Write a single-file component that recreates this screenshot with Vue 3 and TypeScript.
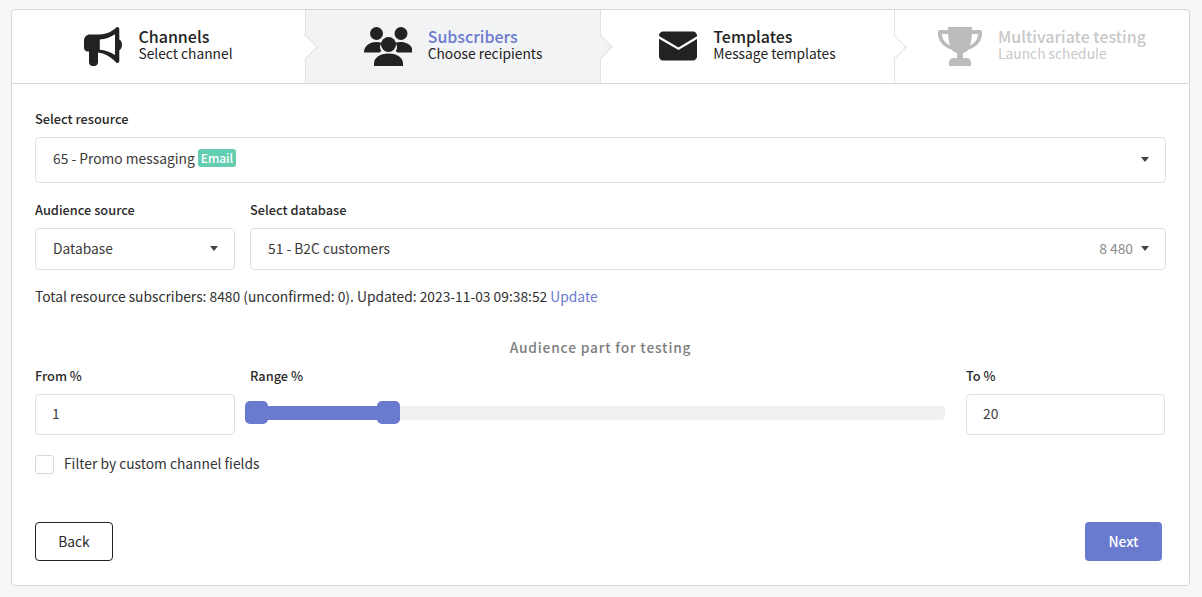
<script setup lang="ts">
import { computed, ref } from 'vue';

interface Step {
    key: string;
    title: string;
    sub: string;
    state?: 'active' | 'disabled';
}

const steps: Step[] = [
    { key: 'channels', title: 'Channels', sub: 'Select channel' },
    { key: 'subscribers', title: 'Subscribers', sub: 'Choose recipients', state: 'active' },
    { key: 'templates', title: 'Templates', sub: 'Message templates' },
    { key: 'testing', title: 'Multivariate testing', sub: 'Launch schedule', state: 'disabled' }
];

const from = ref(1);
const to = ref(20);
const filterByFields = ref(false);

// px per percent on the slider rail
const handleLeft = (v: number) => (v - 1) * 6.95;
const fillWidth = computed(() => handleLeft(to.value) - handleLeft(from.value) + 12);
</script>

<template>
    <div class="card">
        <div class="steps">
            <div v-for="step in steps" :key="step.key" class="step" :class="step.state">
                <svg v-if="step.key === 'channels'" class="step-icon" viewBox="0 0 38 39" fill="currentColor">
                    <path d="M32.5 0.2c1.4-.6 2.8.3 2.8 1.8v10.6c1.6.7 2.7 2.8 2.7 5.3s-1.1 4.600-2.700 5.300v10.800c0 1.500-1.400 2.400-2.800 1.800-6.200-6.500-11.900-9.300-18.500-10.300v9.700c0 2.100-1.600 3.800-3.700 3.800H8.700c-2.100 0-3.700-1.700-3.700-3.800V24.600H3.800C1.700 24.600 0 22.900 0 20.800v-6.900c0-3.900 2.700-6.300 6-6.300h5.800C20.700 7.600 26.500 6 32.500.2zM31 7.200c-4.500 3.200-9.800 4.900-15.200 5.300v10.300c5.400.5 10.700 2.100 15.200 5.300z" fill-rule="evenodd" />
                </svg>
                <svg v-else-if="step.key === 'subscribers'" class="step-icon wide" viewBox="0 0 48 39" fill="currentColor">
                    <circle cx="12.500" cy="6.500" r="6.500" />
                    <circle cx="37" cy="6.500" r="6.500" />
                    <path d="M0 25.500C0 19.500 5 15 12.500 15c2 0 3.800.3 5.300.9-2.200 2.300-2.400 5.500-.5 8.100-.7.500-1.300 1-1.800 1.500z" />
                    <path d="M49 25.500C49 19.500 44 15 36.500 15c-2 0-3.800.3-5.300.9 2.200 2.300 2.400 5.500.5 8.100.7.500 1.300 1 1.800 1.500z" />
                    <circle cx="24.500" cy="17.500" r="7.500" />
                    <path d="M10 39v-2.500C10 31 15.500 26.500 24.500 26.500s14.500 4.500 14.500 10V39z" />
                </svg>
                <svg v-else-if="step.key === 'templates'" class="step-icon" viewBox="0 0 38 38" fill="currentColor">
                    <path d="M4 4h30c2.200 0 4 1.800 4 4v.8L19.500 20 0 8.600V8c0-2.200 1.800-4 4-4z" />
                    <path d="M0 11.200l19.500 11.400L38 11.400V29c0 2.200-1.800 4-4 4H4c-2.200 0-4-1.800-4-4z" />
                </svg>
                <svg v-else class="step-icon wide" viewBox="0 0 44 39" fill="currentColor">
                    <path d="M10 0h24v3h8c1.200 0 2 .8 2 2v2c0 8-7 14-13.500 15.500-1.500 1.800-3.500 3.100-5.500 3.700V31h3.500c2.500 0 4.500 1.500 4.500 5v3H11v-3c0-3.500 2-5 4.500-5H19v-4.800c-2-.6-4-1.900-5.500-3.700C7 21 0 15 0 7V5c0-1.200.8-2 2-2h8zM4 7c0 5 4 9.800 8 11.300C10.800 15 10.200 11 10 7zm36 0h-6c-.2 4-.8 8-2 11.300 4-1.500 8-6.300 8-11.300z" fill-rule="evenodd" />
                </svg>
                <div class="step-text">
                    <div class="step-title">{{ step.title }}</div>
                    <div class="step-sub">{{ step.sub }}</div>
                </div>
                <span class="step-arrow"></span>
            </div>
        </div>

        <div class="content">
            <label class="field-label">Select resource</label>
            <div class="select tall">
                <span class="select-value">65 - Promo messaging</span>
                <span class="tag">Email</span>
                <span class="caret"></span>
            </div>

            <div class="row row-source">
                <div class="col-side">
                    <label class="field-label">Audience source</label>
                    <div class="select">
                        <span class="select-value">Database</span>
                        <span class="caret"></span>
                    </div>
                </div>
                <div class="col-main">
                    <label class="field-label">Select database</label>
                    <div class="select">
                        <span class="select-value">51 - B2C customers</span>
                        <span class="count">8 480</span>
                        <span class="caret"></span>
                    </div>
                </div>
            </div>

            <p class="totals">
                Total resource subscribers: 8480 (unconfirmed: 0). Updated: 2023-11-03 09:38:52
                <a class="link">Update</a>
            </p>

            <div class="part-title">Audience part for testing</div>

            <div class="row">
                <div class="col-side">
                    <label class="field-label">From %</label>
                    <input v-model="from" class="input" type="text" />
                </div>
                <div class="col-main">
                    <label class="field-label">Range %</label>
                    <div class="slider">
                        <div class="slider-fill" :style="{ left: handleLeft(from) + 6 + 'px', width: fillWidth + 'px' }"></div>
                        <span class="slider-handle" :style="{ left: handleLeft(from) + 'px' }"></span>
                        <span class="slider-handle" :style="{ left: handleLeft(to) + 'px' }"></span>
                    </div>
                </div>
                <div class="col-side col-to">
                    <label class="field-label">To %</label>
                    <input v-model="to" class="input" type="text" />
                </div>
            </div>

            <label class="check">
                <input v-model="filterByFields" type="checkbox" />
                <span class="check-box"></span>
                <span class="check-text">Filter by custom channel fields</span>
            </label>

            <div class="actions">
                <button class="btn btn-back" type="button">Back</button>
                <button class="btn btn-next" type="button">Next</button>
            </div>
        </div>
    </div>
</template>

<style scoped>
.card {
    box-sizing: border-box;
    width: 1179px;
    height: 577px;
    margin: 9px 0 0 11px;
    background: #fff;
    border: 1px solid #d8d8d8;
    border-radius: 4px;
    color: #222;
    font-family: "Noto Sans CJK SC", "Noto Sans", sans-serif;
    font-size: 14px;
    overflow: hidden;
}

.steps {
    display: grid;
    grid-template-columns: 293px 295px 294px 1fr;
    height: 74px;
    border-bottom: 1px solid #d8d8d8;
    box-sizing: border-box;
}

.step {
    position: relative;
    display: flex;
    align-items: center;
    justify-content: center;
    gap: 16px;
    border-left: 1px solid #e2e2e2;
    color: #222;
}

.step:first-child {
    border-left: none;
}

.step.active {
    background: #f2f3f5;
}

.step.active .step-title {
    color: #6a7bcf;
}

.step.disabled {
    color: #c8c8c8;
}

.step-icon {
    width: 38px;
    height: 39px;
    flex-shrink: 0;
}

.step-icon.wide {
    width: 48px;
}

.step.disabled .step-icon {
    width: 44px;
    color: #bcbcbc;
}

.step-text {
    padding-bottom: 5px;
}

.step-title {
    font-size: 16px;
    font-weight: 500;
    line-height: 18px;
}

.step-sub {
    font-size: 13.800px;
    line-height: 16px;
}

.step-arrow {
    position: absolute;
    z-index: 1;
    top: 50%;
    right: -9px;
    width: 18px;
    height: 18px;
    margin-top: -9px;
    background: inherit;
    border-top: 1px solid #e2e2e2;
    border-right: 1px solid #e2e2e2;
    box-sizing: border-box;
    transform: rotate(45deg);
}

.step:first-child .step-arrow,
.step:nth-child(3) .step-arrow {
    background: #fff;
}

.step:last-child .step-arrow {
    display: none;
}

.content {
    padding: 26px 23px 0;
}

.field-label {
    display: block;
    margin-bottom: 9px;
    font-size: 12.800px;
    font-weight: 500;
    line-height: 18px;
    color: #2b2b2b;
}

.select {
    position: relative;
    display: flex;
    align-items: center;
    gap: 3px;
    box-sizing: border-box;
    height: 42px;
    padding: 0 17px 3px;
    border: 1px solid #e0e0e0;
    border-radius: 4px;
    font-size: 13.800px;
    color: #3a3a3a;
}

.select.tall {
    height: 46px;
    padding-bottom: 4px;
}

.tag {
    padding: 0 3px;
    border-radius: 3px;
    background: #62cdb0;
    color: #fff;
    font-size: 12px;
    font-weight: 500;
    line-height: 18px;
}

.count {
    margin-left: auto;
    margin-right: 15px;
    color: #8a8a8a;
}

.caret {
    position: absolute;
    top: 50%;
    right: 16px;
    margin-top: -3px;
    border-top: 5px solid #444;
    border-left: 4px solid transparent;
    border-right: 4px solid transparent;
}

.row {
    display: flex;
    gap: 15px;
}

.row-source {
    margin-top: 18px;
}

.col-side {
    flex: 0 0 200px;
}

.col-to {
    flex-basis: 199px;
    margin-right: 1px;
}

.col-main {
    flex: 1;
    min-width: 0;
}

.totals {
    margin: 16px 0 0;
    font-size: 13.800px;
    line-height: 20px;
    color: #2f2f2f;
}

.link {
    color: #6a7bcf;
}

.part-title {
    margin-top: 31px;
    margin-bottom: 10px;
    text-align: center;
    font-size: 13.800px;
    font-weight: 500;
    letter-spacing: 0.8px;
    line-height: 20px;
    color: #7e7e7e;
}

.input {
    display: block;
    box-sizing: border-box;
    width: 100%;
    height: 41px;
    padding: 0 16px 3px;
    border: 1px solid #e0e0e0;
    border-radius: 4px;
    outline: none;
    font: inherit;
    font-size: 13.800px;
    color: #3a3a3a;
}

.slider {
    position: relative;
    height: 14px;
    margin: 21px 6px 0 -5px;
    background: #f1f1f1;
    border-radius: 4px;
}

.slider-fill {
    position: absolute;
    top: 0;
    bottom: 0;
    background: #6a7bcf;
}

.slider-handle {
    position: absolute;
    top: -5px;
    width: 23px;
    height: 23px;
    background: #6a7bcf;
    border-radius: 5px;
}

.check {
    display: flex;
    align-items: flex-start;
    gap: 10px;
    margin-top: 20px;
    font-size: 13.800px;
    color: #333;
}

.check input {
    display: none;
}

.check-box {
    box-sizing: border-box;
    width: 19px;
    height: 19px;
    border: 1px solid #d8d8d8;
    border-radius: 3px;
}

.check-text {
    height: 20px;
    line-height: 16px;
}

.actions {
    display: flex;
    justify-content: space-between;
    margin-top: 47px;
    padding-right: 4px;
}

.btn {
    box-sizing: border-box;
    width: 78px;
    height: 39px;
    padding: 0 0 2px;
    border-radius: 4px;
    font-family: inherit;
    font-size: 13.800px;
}

.btn-back {
    background: #fff;
    border: 1px solid #222;
    color: #2b2b2b;
}

.btn-next {
    width: 77px;
    background: #6a7bcf;
    border: none;
    color: #fff;
    font-weight: 500;
}
</style>

<style>
html,
body {
    background: #f6f6f6;
}
</style>
